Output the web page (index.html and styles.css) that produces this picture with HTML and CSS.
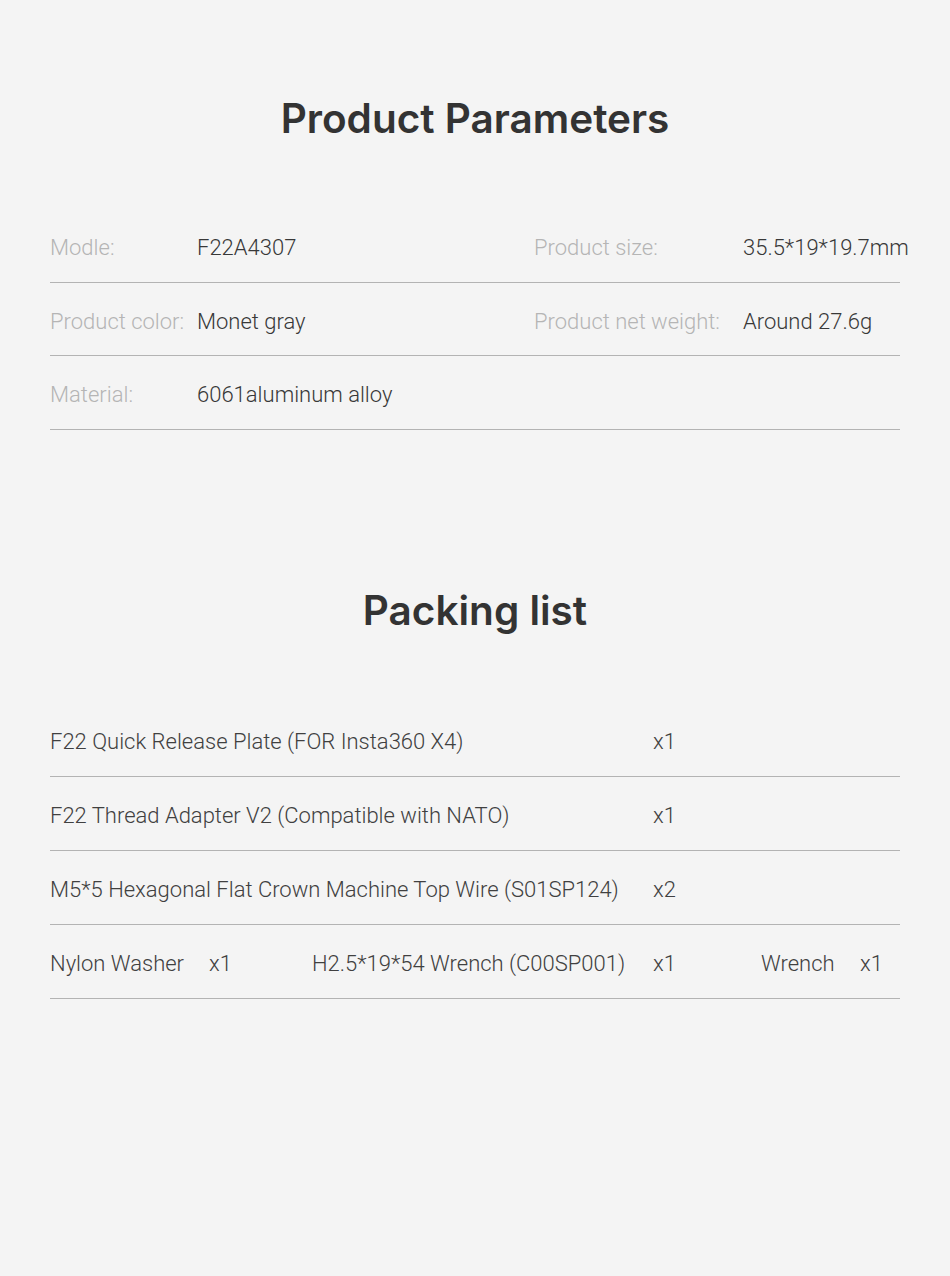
FILE: index.html
```html
<!DOCTYPE html>
<html>
<head>
<meta charset="utf-8">
<link rel="stylesheet" href="styles.css">
</head>
<body>
<div class="page">
  <h1 class="title title-params">Product Parameters</h1>
  <div class="spec">
    <div class="spec-row">
      <span class="label">Modle:</span><span class="value">F22A4307</span>
      <span class="label">Product size:</span><span class="value">35.5*19*19.7mm</span>
    </div>
    <div class="spec-row">
      <span class="label">Product color:</span><span class="value">Monet gray</span>
      <span class="label">Product net weight:</span><span class="value">Around 27.6g</span>
    </div>
    <div class="spec-row">
      <span class="label">Material:</span><span class="value">6061aluminum alloy</span>
      <span></span><span></span>
    </div>
  </div>

  <h1 class="title title-pack">Packing list</h1>
  <div class="pack">
    <div class="pack-row">
      <span class="item span3">F22 Quick Release Plate (FOR Insta360 X4)</span><span class="qty">x1</span>
    </div>
    <div class="pack-row">
      <span class="item span3">F22 Thread Adapter V2 (Compatible with NATO)</span><span class="qty">x1</span>
    </div>
    <div class="pack-row">
      <span class="item span3">M5*5 Hexagonal Flat Crown Machine Top Wire (S01SP124)</span><span class="qty">x2</span>
    </div>
    <div class="pack-row">
      <span class="item">Nylon Washer</span><span class="qty">x1</span>
      <span class="item">H2.5*19*54 Wrench (C00SP001)</span><span class="qty">x1</span>
      <span class="item">Wrench</span><span class="qty">x1</span>
    </div>
  </div>
</div>
</body>
</html>
```

FILE: styles.css
```css
html, body {
  margin: 0;
  padding: 0;
  background: #f4f4f4;
}
body {
  font-family: Roboto, "Noto Sans", "Liberation Sans", sans-serif;
  color: #3a3a3a;
}
.page {
  width: 850px;
  margin: 0 auto;
  padding-top: 92px;
  height: 1184px;
}
.title {
  margin: 0;
  text-align: center;
  font-family: Inter, "Noto Sans", sans-serif;
  font-size: 40.5px;
  font-weight: 600;
  color: #333333;
  line-height: 54px;
}
.title-params {
  margin-bottom: 63px;
}
.spec-row {
  display: grid;
  grid-template-columns: 147px 337px 209px 157px;
  height: 73.5px;
  box-sizing: border-box;
  padding-top: 5px;
  align-items: center;
  border-bottom: 1px solid #b3b3b3;
  font-size: 22px;
  font-weight: 300;
  white-space: nowrap;
}
.label {
  color: #b5b5b5;
}
.value {
  color: #383838;
}
.title-pack {
  margin-top: 154px;
  margin-bottom: 65px;
}
.pack-row {
  display: grid;
  grid-template-columns: 159px 103px 341px 108px 99px 40px;
  height: 74px;
  box-sizing: border-box;
  padding-top: 4px;
  align-items: center;
  border-bottom: 1px solid #b3b3b3;
  font-size: 22px;
  font-weight: 300;
  color: #404040;
  white-space: nowrap;
}
.span3 {
  grid-column: 1 / span 3;
}
```
